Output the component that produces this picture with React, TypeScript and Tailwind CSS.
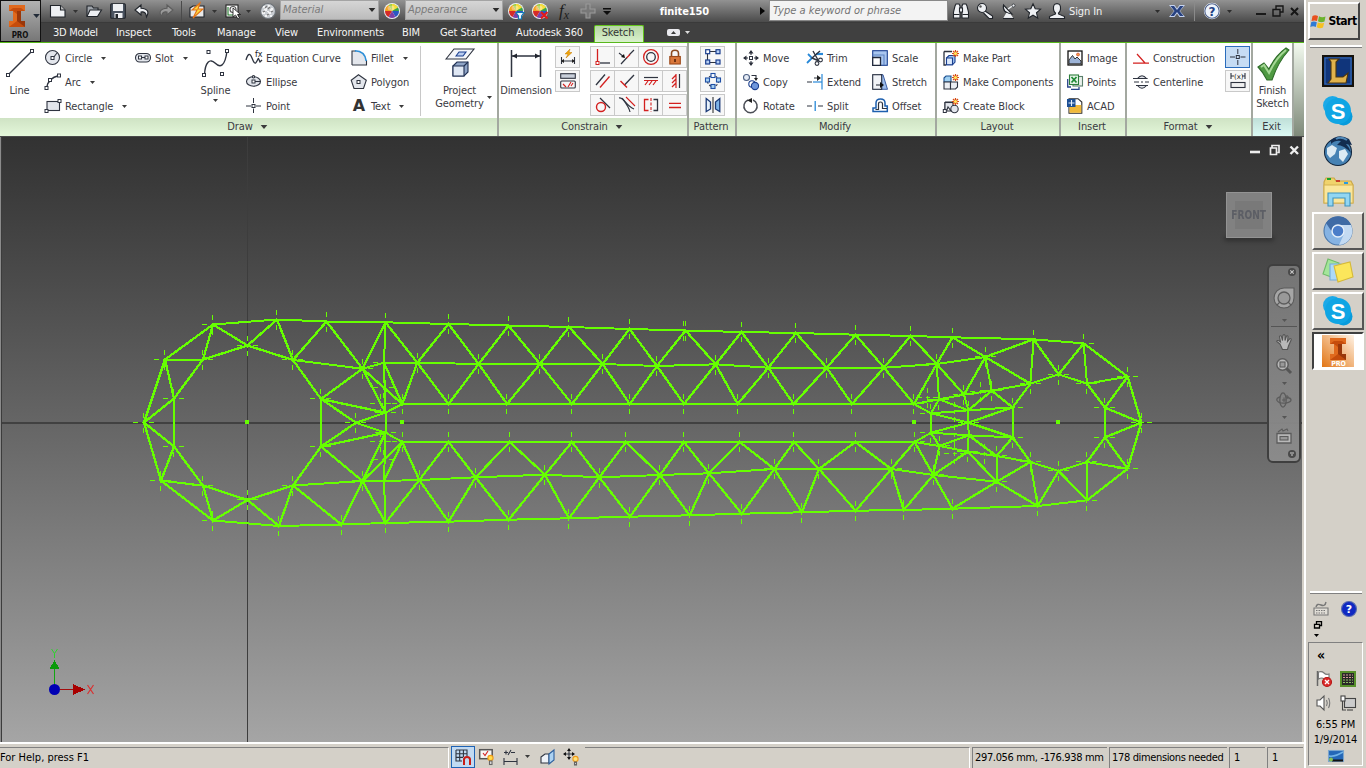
import React from "react";

type Pt = [number, number];
type Kids = { children?: React.ReactNode; className?: string };

const G = "#66ff00";

/* ---------- sketch geometry ---------- */
const L: Record<string, Pt> = {
  n1: [144, 422.5], n2: [165, 359.5], n3: [213, 324.5], n4: [277, 319.5], n5: [326.5, 321.5],
  a1: [203, 359.5], a2: [247.5, 345.5], a3: [293, 360], a4: [174, 398.5], a5: [174, 446.5],
  a6: [161, 480.7], a7: [203, 485.5], a8: [213, 520.5], a9: [247.5, 500], a10: [293, 485.5],
  a11: [279, 526], a12: [341.5, 524.5], a14: [321, 399], a15: [321, 446.5],
  a16: [362.5, 368.7], a17: [384, 362.7], a20: [385.5, 412.7], a21: [356, 422.7], a22: [385.5, 432.7],
  a24: [362.5, 481], a25: [384, 481],
};
const z = (x: number, y: number): Pt => [750 + x / 3, 300 + y / 3];
const R: Record<string, Pt> = {
  b: z(543, 340), c: z(567, 298), d: z(642, 284), e: z(655, 331), f: z(725, 272), g: z(841, 251),
  h: z(788, 322), i: z(655, 368), j: z(543, 398), k: z(656, 406), l: z(788, 412), m: z(568, 438),
  n: z(653, 455), o: z(740, 468), p: z(841, 486), q: z(926, 223), r: z(1011, 251), s: z(1065, 323),
  t: z(1065, 412), u: z(1011, 486), v: z(926, 513),
  A: z(851, 118), B: z(1001, 130), C: z(1133, 230), D: z(1174, 368), E: z(1133, 506), F: z(1011, 601), H: z(863, 618),
};
const topOuter: Pt[] = [[385.5, 322.3], [448.5, 324], [508.5, 325.5], [569, 327], [629.5, 329], [685.5, 330.5], [741.5, 332], [796, 333], [855.5, 334.7], [910.5, 336], [952.5, 337.3]];
const topMid: Pt[] = [[417.3, 362.7], [478.7, 364], [540, 364], [602.7, 364], [657, 366], [715.7, 364.3], [768.3, 367.7], [826.7, 367.7], [884, 367.7], [936.7, 364], [985.3, 357]];
const topIn: Pt[] = [402.3, 448.5, 507, 572, 629.7, 684, 737.7, 793.7, 852, 914].map((x) => [x, 404]);
const botIn: Pt[] = [402.3, 448.5, 509.7, 572, 626, 684, 739.7, 794, 855.3, 914.7].map((x) => [x, 442]);
const botMid: Pt[] = [[419.3, 480], [475.7, 477.3], [545, 474.7], [599.3, 477.3], [660, 475], [709, 473.3], [774.3, 469], [819, 469], [891.3, 469], [933.3, 475], [996.7, 481.7]];
const botOuter: Pt[] = [[385.5, 523], [448.5, 521.7], [508.7, 519.7], [569, 518.3], [630, 516.7], [689.7, 515.3], [741.7, 513.7], [802, 512.3], [855.7, 510.7], [903.7, 510], [952.5, 508.7]];

const segs: [Pt, Pt][] = [];
const chain = (ps: Pt[]) => { for (let k = 1; k < ps.length; k++) segs.push([ps[k - 1], ps[k]]); };
[topOuter, topMid, topIn, botIn, botMid, botOuter].forEach(chain);
([[topOuter, topMid], [topIn, topMid], [botIn, botMid], [botOuter, botMid]] as [Pt[], Pt[]][]).forEach(([o, m]) => {
  o.forEach((p, k) => {
    segs.push([p, m[k]]);
    if (k > 0) segs.push([p, m[k - 1]]);
  });
});
const N: Record<string, Pt> = {
  ...L, n6: topOuter[0], a18: topMid[0], a19: topIn[0], a23: botIn[0], a26: botMid[0], a13: botOuter[0],
};
("n1-n2 n2-n3 n3-n4 n4-n5 n5-n6 n2-a1 a1-a2 a1-n3 n3-a2 a2-n4 a2-a3 n4-a3 a3-n5 n5-a16 a3-a16 a3-a14 n6-a16 n6-a17 a16-a17 a17-a18 " +
  "a16-a19 a17-a19 a16-a20 a14-a16 a14-a20 a14-a21 a14-a15 a15-a21 a15-a22 a15-a24 a15-a10 a21-a20 a21-a22 a20-a19 a20-a22 a22-a23 " +
  "a17-a20 a22-a25 a25-a13 a22-a24 a23-a24 a23-a25 a24-a25 a25-a26 a24-a10 a24-a12 a24-a13 a10-a12 a10-a11 a9-a11 a9-a8 a8-a7 a7-a9 " +
  "a9-a10 a8-a11 a11-a12 a12-a13 a7-a6 a6-a5 a5-a7 a6-a8 a6-n1 a5-n1 a4-n1 a4-a5 a4-n2 a4-a1").split(" ").forEach((e) => {
  const [p, q] = e.split("-");
  segs.push([N[p], N[q]]);
});
const M: Record<string, Pt> = {
  ...R, a: topIn[9], a_: botIn[9], y9: topMid[9], y10: topMid[10], x: botMid[9], w: botMid[10], T: topOuter[10], S: botOuter[10],
};
("a-b b-c a-c c-d d-f f-g c-y9 y9-d d-y10 y10-f y10-g y10-A T-A A-B B-C C-D D-E E-F F-H H-S g-A c-e d-e e-f f-h g-h b-e e-h b-i e-i i-h h-l i-l " +
  "b-j j-i j-k k-i k-l k-n j-m j-a_ a_-m m-n m-k n-o o-k o-l o-p l-p m-x n-x n-w o-w w-p w-H p-H p-v v-H v-u v-F u-F u-E u-t t-E t-D t-s s-D s-C s-r r-C r-B r-q q-B q-A q-g").split(" ").forEach((e) => {
  const [p, q] = e.split("-");
  segs.push([M[p], M[q]]);
});
const loose: Pt[] = [[381, 403.5], [383.5, 387.5], [381, 441.5], [383.5, 459.5], z(532, 293), z(614, 336), z(692, 275), z(614, 460), z(704, 462), z(614, 405), [684, 331]];
const nodes: Pt[] = [...Object.values(L), ...Object.values(R), ...topOuter, ...topMid, ...topIn, ...botIn, ...botMid, ...botOuter, ...loose];
const tick = ([px, py]: Pt) => {
  const x = Math.floor(px - 0.01) + 0.5;
  const y = Math.floor(py - 0.01) + 0.5;
  return `M${x} ${y - 9.5}v5M${x} ${y - 2}v4M${x} ${y + 5.5}v5M${x - 10.5} ${y}h5M${x - 2} ${y}h4M${x + 5.5} ${y}h5`;
};
const steep = segs.filter(([a, b]) => Math.abs(a[0] - b[0]) > 8 && Math.abs(a[1] - b[1]) > 12);
const flat = segs.filter((s) => !steep.includes(s));
const toPath = (s: [Pt, Pt][]) => s.map(([a, b]) => `M${a[0]} ${a[1]}L${b[0]} ${b[1]}`).join("");

function Drawing() {
  return (
    <svg className="absolute inset-0" width="1302" height="605" viewBox="0 137 1302 605" shapeRendering="crispEdges">
      <path d="M1.5 137V742" stroke="#3c3c3c" />
      <path d="M0.5 137V742" stroke="#8b8b8b" />
      <path d="M247.5 137V742" stroke="#3d3d3d" />
      <path d="M2 423H1302" stroke="#414141" strokeWidth="2" />
      <path d={nodes.map(tick).join("")} stroke={G} fill="none" />
      <path d={toPath(flat)} stroke={G} strokeWidth="2" fill="none" />
      <path d={toPath(steep)} stroke={G} strokeWidth="2.3" fill="none" />
      {[[245, 420], [400, 420], [912, 420], [1056, 420]].map(([x, y]) => <rect key={x} x={x} y={y} width="4" height="4" fill={G} />)}
      <path d="M54.5 689V668" stroke="#11a611" />
      <path d="M49.5 669L54.5 660L59.5 669Z" fill="#0a9a0a" />
      <path d="M60 689.5H74" stroke="#a30d0d" />
      <path d="M73 684L85 689.5L73 695Z" fill="#a80000" />
      <circle cx="54.5" cy="689.5" r="5.5" fill="#0000b4" shapeRendering="auto" />
      <path d="M51.5 649L54.5 653.5V658M57.5 649L54.5 653.5" stroke="#2bd42b" fill="none" shapeRendering="auto" />
      <path d="M87.5 685L93.5 694M93.5 685L87.5 694" stroke="#d93030" shapeRendering="auto" strokeWidth="1.2" />
    </svg>
  );
}

/* ---------- icon helpers ---------- */
function Ic({ s = 16, w, h, children }: { s?: number; w?: number; h?: number; children: React.ReactNode }) {
  return <svg className="shrink-0 overflow-visible" width={w ?? s} height={h ?? s} viewBox={`0 0 ${w ?? s} ${h ?? s}`} fill="none" stroke="#2f3440" strokeWidth="1.1">{children}</svg>;
}
function Dot({ x, y, c = "#2f3440", f = "#fff" }: { x: number; y: number; c?: string; f?: string }) {
  return <rect x={x - 1.5} y={y - 1.5} width="3" height="3" fill={f} stroke={c} strokeWidth="1" />;
}
function Arrow({ c = "#3b3b3b", w = 5 }: { c?: string; w?: number }) {
  return <svg className="shrink-0" width={w} height={Math.ceil(w / 2)} viewBox="0 0 10 6"><path d="M0 0H10L5 6Z" fill={c} /></svg>;
}
function Wheel({ children }: { children?: React.ReactNode }) {
  const cols = ["#2a57c4", "#7b3fa8", "#37a34a", "#9ac832", "#f4a21f", "#d52b27"];
  const order = [0, 1, 5, 4, 3, 2].map((k) => cols[k]);
  return (
    <Ic>
      <g stroke="none">
        <circle cx="8" cy="8" r="8" fill="#eef1f5" />
        {order.map((c, k) => {
          const a = (k * Math.PI) / 3, b = ((k + 1) * Math.PI) / 3;
          return <path key={c} fill={c} d={`M8 8L${8 + 7 * Math.cos(a)} ${8 + 7 * Math.sin(a)}A7 7 0 0 1 ${8 + 7 * Math.cos(b)} ${8 + 7 * Math.sin(b)}Z`} />;
        })}
        <path d="M8 8L8 1A7 7 0 0 1 14 4.500Z" fill="#f6dc3a" />
        <ellipse cx="7" cy="5" rx="3.5" ry="2.5" fill="#fff" opacity=".35" />
      </g>
      {children}
    </Ic>
  );
}

const RED = "#d3201f";
const BL = "#1b3f8f";
const burst = <g><path d="M12.5 0V7M9 3.5H16M10 1L15 6M15 1L10 6" stroke="#d84a12" strokeWidth="1.2" /><circle cx="12.5" cy="3.5" r="1.6" fill="#ffe95a" stroke="none" /></g>;
const face = "#e3e6ec";

const I = {
  circle: <Ic><circle cx="7.5" cy="7.5" r="7" fill={face} /><path d="M8 8L12 3" /><Dot x={7.5} y={8} /></Ic>,
  arc: <Ic><path d="M1.5 14Q3 4 14 1.5" strokeWidth="1.4" /><Dot x={1.5} y={14} /><Dot x={5} y={6} /><Dot x={14} y={1.5} /></Ic>,
  rect: <Ic><rect x="2" y="3.5" width="12.5" height="9" fill={face} /><Dot x={1.5} y={13} /><Dot x={14.5} y={3} /></Ic>,
  slot: <Ic><rect x=".5" y="3.5" width="15" height="8.5" rx="4.2" fill={face} /><path d="M4.5 7.5H11" /><Dot x={5} y={7.5} /><Dot x={11.5} y={7.5} /></Ic>,
  line: <Ic w={28} h={30}><path d="M2 27L26 3" strokeWidth="1.5" /><Dot x={2} y={27} /><Dot x={26} y={3} /></Ic>,
  spline: <Ic w={28} h={30}><path d="M2.5 27C3 14 8 10 13 15S23 19 25 3" strokeWidth="1.4" /><Dot x={2} y={27} /><Dot x={6.5} y={4} /><Dot x={20} y={26} /><Dot x={25} y={3} /></Ic>,
  eq: <Ic><path d="M0 10C2 3 4 3 6 8S9 15 11 11S12 8 14 12L16 10" strokeWidth="1.3" /><text x="9" y="6.5" fontSize="8" stroke="none" fill="#222" fontFamily="DejaVu Sans">fx</text></Ic>,
  ellipse: <Ic><ellipse cx="7.5" cy="7.5" rx="7" ry="4.7" fill={face} /><path d="M7.5 7.5H14" /><Dot x={7.5} y={7.5} /><circle cx="7.5" cy="2.8" r="1.2" fill="#fff" /></Ic>,
  point: <Ic><path d="M0 8H5M10 8H15M7.5 0V5M7.5 10.5V15" strokeWidth="1" /><Dot x={7.5} y={8} /></Ic>,
  fillet: <Ic><path d="M1 1H5Q15 2 15.5 11V15H1Z" fill={face} stroke="none" /><path d="M1 15V1H5M15.5 10V15H1" /><path d="M4 .8Q14 1 15.2 11" stroke="#2d8fd8" strokeWidth="1.6" /></Ic>,
  polygon: <Ic><path d="M7.5 .8L15.3 6.2L12.5 14.5H3L.2 6.2Z" fill={face} /><Dot x={7.5} y={8} /></Ic>,
  text: <span className="w-4 text-center font-['DejaVu_Sans'] text-[16px] leading-4 font-bold text-[#333]">A</span>,
  proj: <Ic w={30} h={30}><path d="M1 11L9 1H29L21 11Z" fill="#f4f6fa" /><path d="M11 8L14 4H21L18 8Z" fill="#b9cdf0" stroke={BL} /><path d="M8 18L12 14H23V24L19 28H8Z" fill="#8fa4c6" stroke="#1f2f52" /><path d="M8 18H19V28H8Z" fill="#dfe7f4" stroke="#1f2f52" /><path d="M19 18L23 14" stroke="#1f2f52" /></Ic>,
  dim: <Ic w={32} h={30}><path d="M1.5 2V29M30.5 2V29M2 8H30" strokeWidth="1.5" /><path d="M2 8L7 5.5V10.5ZM30 8L25 5.5V10.5Z" fill="#20242e" stroke="none" /></Ic>,
  autodim: <Ic><path d="M1.5 8V15M14.5 8V15M2 12H14" /><path d="M1 12L4 10V14ZM15 12L12 10V14Z" fill="#222" stroke="none" /><path d="M10 0L5 5H8L6 9L12 3.5H9Z" fill="#f0a50a" stroke="#c77a00" strokeWidth=".5" /></Ic>,
  showc: <Ic><rect x=".7" y=".7" width="14.6" height="4.6" fill="#c9cfda" /><rect x=".7" y="8" width="14.6" height="7" rx="1" fill="#f6f6f6" /><path d="M3 11L6 14M8 14L11 9M11 13L13 10" stroke={RED} /></Ic>,
  coin: <Ic><path d="M2.5 0V12" stroke={RED} strokeWidth="1.3" /><path d="M5 14H15" strokeWidth="1.3" /><Dot x={2.5} y={14} c={RED} /></Ic>,
  coll: <Ic><path d="M15 1L10 6M8 8.5L2 15" strokeWidth="1.2" /><path d="M11 5.5L7.5 9" stroke={RED} strokeWidth="1.3" /><path d="M0 4L5 8" /><path d="M6 9L2 8L5 5Z" fill="#111" stroke="none" /></Ic>,
  conc: <Ic><circle cx="8" cy="8" r="7.4" stroke={RED} strokeWidth="1.3" /><circle cx="8" cy="8" r="4.3" strokeWidth="1.3" /></Ic>,
  lock: <Ic><path d="M4.5 8V4.5Q4.5 1.3 8 1.3T11.5 4.5V8" stroke="#8d4a1e" strokeWidth="1.6" /><rect x="2.8" y="7.5" width="10.5" height="7.5" fill="#d9773a" stroke="#9c4a1b" /><path d="M8 10V13" stroke="#57240a" strokeWidth="1.6" /></Ic>,
  par: <Ic><path d="M1 12L10 1.5" strokeWidth="1.3" /><path d="M5 14.5L14.5 3.5" stroke={RED} strokeWidth="1.3" /></Ic>,
  perp: <Ic><path d="M5.5 12L15 2" strokeWidth="1.3" /><path d="M1.5 8L8 14.5" stroke={RED} strokeWidth="1.4" /></Ic>,
  hor: <Ic><path d="M1 4.5H15" strokeWidth="1.2" /><path d="M1 7.5H15M5 8L2 12M9 8L6 12M13 8L10 12" stroke={RED} strokeWidth="1.2" /></Ic>,
  ver: <Ic><path d="M12.5 1V15" strokeWidth="1.2" /><path d="M9 1V15M9 2L5 6M9 6L5 10M9 10L5 14" stroke={RED} strokeWidth="1.2" /></Ic>,
  tan: <Ic><path d="M5 1L15 11" strokeWidth="1.3" /><circle cx="6" cy="10" r="4.5" stroke={RED} strokeWidth="1.4" /></Ic>,
  smooth: <Ic><path d="M0 1C5 0 7 9 15 12" strokeWidth="1.2" /><path d="M3 1C6 5 10 10 11 15" strokeWidth="1.2" /><path d="M7 0L16 9" stroke={RED} strokeWidth="1.1" /></Ic>,
  sym: <Ic><path d="M5.5 2.5H1.5V13.5H5.5" stroke={RED} strokeWidth="1.3" /><path d="M8 1V15" stroke={RED} strokeDasharray="3 1.5" /><path d="M10.5 2.5H14.5V13.5H10.5" strokeWidth="1.3" /></Ic>,
  equal: <Ic><path d="M2 6.3H14M2 10.5H14" stroke={RED} strokeWidth="1.3" /></Ic>,
  prect: <Ic><path d="M5 2.5H11M2.5 5V11M5 13.5H11" /><g stroke={BL} strokeWidth="1.2" fill="#b7d0f4"><rect x=".7" y=".7" width="4" height="4" fill="#fff" /><rect x="11" y=".7" width="4" height="4" /><rect x=".7" y="11" width="4" height="4" /><rect x="11" y="11" width="4" height="4" /></g></Ic>,
  pcirc: <Ic><circle cx="8" cy="8" r="5.5" strokeDasharray="2 1.5" /><g stroke="#1f4fa5" strokeWidth="1.1" fill="#a8d1f2"><rect x="6" y=".5" width="4" height="4" fill="#fff" /><rect x=".5" y="5" width="4" height="4" /><rect x="11.5" y="5" width="4" height="4" /><rect x="6" y="11.5" width="4" height="4" /></g></Ic>,
  mirror: <Ic><path d="M8 0V16" stroke="#333" /><path d="M1.2 1.5L5.5 5V12L1.2 14.500Z" fill="#e8f2fb" stroke="#1b3a78" strokeWidth="1.3" /><path d="M14.8 1.5L10.5 5V12L14.8 14.500Z" fill="#7fb4e8" stroke="#1b3a78" strokeWidth="1.3" /></Ic>,
  move: <Ic><path d="M8 1V5M8 11V15M1 8H5M11 8H15" /><path d="M8 0L10.5 3.5H5.5ZM8 16L10.5 12.5H5.5ZM0 8L3.5 5.5V10.5ZM16 8L12.5 5.5V10.5Z" fill="#2b2f3a" stroke="none" /><Dot x={8} y={8} /></Ic>,
  copy: <Ic><circle cx="3.5" cy="3.5" r="3" fill="#e6ecf6" stroke="#4b5e82" /><circle cx="9" cy="10" r="3.2" fill="#fff" stroke={BL} /><circle cx="12" cy="12" r="3.6" fill="#6f97dc" stroke={BL} /><path d="M8.5 1.5H13V5" /><path d="M11 4H15L13 7Z" fill="#222" stroke="none" /></Ic>,
  rotate: <Ic><path d="M5 2A6.6 6.6 0 1 0 10 2" stroke="#4a4d55" strokeWidth="1.5" /><path d="M9 0L4 2.2L9 5Z" fill="#222" stroke="none" /></Ic>,
  trim: <Ic><path d="M1 4L5 8L0 13" stroke="#2788d8" strokeWidth="1.8" /><path d="M9 4H16" stroke="#2788d8" strokeWidth="2.2" /><path d="M6 1L11 10M13 1L5 8L12 11" strokeWidth="1.4" /><circle cx="13.500" cy="10" r="1.900" /><circle cx="10" cy="13.500" r="1.900" /></Ic>,
  extend: <Ic><path d="M0 8H5M7 4H13" /><path d="M6 8H15" stroke="#2788d8" strokeWidth="1.2" /><path d="M15 0V15.5" stroke="#2788d8" strokeWidth="1.2" /><path d="M10 1L14 4L10 7Z" fill="#222" stroke="none" /></Ic>,
  split: <Ic><path d="M0 8H5M11 8H16" /><path d="M8.2 3V13" stroke="#2788d8" strokeWidth="1.3" /></Ic>,
  scale: <Ic><rect x=".7" y=".7" width="14.6" height="14.6" fill="#a9c6ef" stroke={BL} /><path d="M.7 7.5H8.5V15.3H.7Z" fill="#fff" stroke="#222a3c" strokeWidth="1.3" /><path d="M.7 5H12V15" stroke="#5f84c2" /></Ic>,
  stretch: <Ic><path d="M8 .7H11L15.5 15.3H8Z" fill="#9dbdec" stroke={BL} strokeWidth=".8" /><rect x=".7" y=".7" width="9" height="14.6" fill="#f1f3f7" stroke="#222a3c" /><path d="M4 11H9" /><path d="M8 8L12 11L8 14Z" fill="#111" stroke="none" /></Ic>,
  offset: <Ic><path d="M1 10H4V5Q4 1 8.500 1T13 5V8H15.3V13.5H1Z" fill="#fff" stroke="#1d5fae" strokeWidth="1.5" /><path d="M3.500 11.500H6.500V6Q6.500 4 8.500 4T10.500 6V10.500H15" strokeWidth="1.2" /></Ic>,
  mpart: <Ic><path d="M1 1.5H9M1 1.5V15H3" strokeWidth="1.3" /><path d="M3.5 8L6 5.5H12V12L9.5 14.8H3.5Z" fill="#9fc3f2" stroke={BL} /><path d="M3.5 8H9.5V14.8H3.5Z" fill="#dce9fb" stroke={BL} />{burst}</Ic>,
  mcomp: <Ic><path d="M1 4L3 2H8V8H1Z" fill="#9fd0f2" stroke="#1b4f8f" /><path d="M1 8H7.5V15H1Z" fill="#eceff4" /><path d="M7.5 8H14.5V13L12.5 15H7.5Z" fill="#eceff4" />{burst}</Ic>,
  cblock: <Ic><path d="M2 4H10M2 4V13" /><rect x="2" y="4.5" width="8" height="8" fill={face} /><circle cx="11.5" cy="11" r="3.7" fill={face} /><path d="M3.5 13H8L5 9Z" fill="#fff" /><Dot x={1.8} y={13} />{burst}</Ic>,
  image: <Ic><rect x="1" y="1" width="14" height="14" fill="#fff" stroke="#111" strokeWidth="1.3" /><path d="M2 13V10L5.5 5.5L8 9L10 7L14 11V13.8H2Z" fill="#9db4d8" stroke="#222" strokeWidth=".9" /><circle cx="11" cy="4.5" r="1.5" fill="#f0a040" stroke="#c33" strokeWidth=".6" /></Ic>,
  points: <Ic><rect x="6" y="2.500" width="9.500" height="9.500" fill="#e9f0ec" stroke="#5a7f6b" /><rect x="2.5" y="1" width="9" height="9.500" fill="#e7f5e9" stroke="#2d7d3b" /><path d="M4.500 3L9.500 8.500M9.500 3L4.500 8.500" stroke="#1f8a35" strokeWidth="1.8" /><path d="M.7 5V13H4M4 15.300H12V13" strokeWidth="1.3" stroke="#29468a" /></Ic>,
  acad: <Ic><path d="M2 .7H11L14.8 4V15.3H2Z" fill="#fff" stroke="#2a2a2a" /><path d="M2.500 7H14.300V14.800H2.500Z" fill="#f0b93a" stroke="none" /><path d="M0 1H8.500V9H0Z" fill="#1c4f94" stroke="none" /><path d="M4.5 2V8M1.5 5H7.5" stroke="#e6f2ff" /></Ic>,
  constr: <Ic><path d="M0 13.2H16M4 4L12 13" stroke={RED} strokeWidth="1.2" /></Ic>,
  center: <Ic><path d="M4.500 4.500Q9 -1 13.500 4.500ZM4.500 11.500Q9 17 13.500 11.500Z" fill={face} /><path d="M0 4.500H14.500M3 11.500H15" /><path d="M1 8H6M8 8H10M12 8H16" /></Ic>,
  cpoint: <Ic><path d="M0 8H5M10.5 8H15.5M7.8 0V5M7.8 11V16" strokeWidth="1" /><Dot x={7.8} y={8} f="#c8dcf3" /></Ic>,
  driven: <Ic><path d="M1 0V6M15 0V6M1 3H4M12 3H15" /><text x="4" y="5.8" fontSize="7" stroke="none" fill="#222" fontFamily="DejaVu Sans">(x)</text><rect x="1" y="9.5" width="14" height="5" fill="#f0f0f0" /></Ic>,
};

/* ---------- ribbon parts ---------- */
function Item({ icon, label, arrow }: { icon: React.ReactNode; label: string; arrow?: boolean }) {
  return (
    <div className="flex h-6 items-center whitespace-nowrap">
      {icon}
      <span className="ml-1 pt-px">{label}</span>
      {arrow && <span className="ml-[9px]"><Arrow /></span>}
    </div>
  );
}
function Col({ children, className = "" }: Kids) {
  return <div className={"flex shrink-0 flex-col " + className}>{children}</div>;
}
function Big({ icon, label, className = "", children }: Kids & { icon: React.ReactNode; label: string }) {
  return (
    <div className={"flex shrink-0 flex-col items-center pt-0.5 " + className}>
      <div className="flex h-[35px] items-start">{icon}</div>
      <span className="w-full pt-px text-center leading-[13px] whitespace-pre-line">{label}</span>
      {children}
    </div>
  );
}
function Btn({ children, on }: Kids & { on?: boolean }) {
  return <div className={"-mr-px mb-0.5 flex h-[22px] w-[25px] shrink-0 items-center justify-center border " + (on ? "border-[#2a6cbc] bg-[#c6dcf4]" : "border-[#c9c9c9] bg-[#f7f7f7]")}>{children}</div>;
}
function Panel({ title, arrow, className = "", tone = "from-[#cfe3c4] to-[#e4f7da]", children }: Kids & { title: string; arrow?: boolean; tone?: string }) {
  return (
    <section className={"flex shrink-0 flex-col border-r-2 border-[#a3a8a0] " + className}>
      <div className="flex h-[75px] bg-white pt-[3px]">{children}</div>
      <div className={"flex h-[18px] items-center justify-center gap-[7px] bg-gradient-to-b pr-[2px] " + tone}>
        <span>{title}</span>
        {arrow && <Arrow w={8} />}
      </div>
    </section>
  );
}

function Ribbon() {
  return (
    <div className="flex h-[94px] shrink-0 border-t border-[#58b81c] bg-[#fff] text-[#3a3a42]">
      <Panel title="Draw" arrow className="w-[499px]">
        <Big icon={I.line} label="Line" className="w-[39px]" />
        <Col className="w-[91px] pl-[6px]">
          <Item icon={I.circle} label="Circle" arrow />
          <Item icon={I.arc} label="Arc" arrow />
          <Item icon={I.rect} label="Rectangle" arrow />
        </Col>
        <Col className="w-[67px] pl-[5px]"><Item icon={I.slot} label="Slot" arrow /></Col>
        <Big icon={I.spline} label="Spline" className="w-[37px]"><span className="mt-[2px] flex"><Arrow /></span></Big>
        <Col className="w-[105px] pl-3">
          <Item icon={I.eq} label="Equation Curve" />
          <Item icon={I.ellipse} label="Ellipse" />
          <Item icon={I.point} label="Point" />
        </Col>
        <Col className="w-[81px] pl-3">
          <Item icon={I.fillet} label="Fillet" arrow />
          <Item icon={I.polygon} label="Polygon" />
          <Item icon={I.text} label="Text" arrow />
        </Col>
        <div className="h-[70px] w-px bg-[#c8c8c8]" />
        <Big icon={I.proj} label={"Project\nGeometry"} className="ml-3 w-[53px]" />
        <div className="self-end pb-[19px] pl-px"><Arrow /></div>
      </Panel>
      <Panel title="Constrain" arrow className="w-[190px]">
        <Big icon={I.dim} label="Dimension" className="w-[54px]" />
        <Col className="ml-[2px] w-[35px] gap-0">
          <Btn>{I.autodim}</Btn>
          <Btn>{I.showc}</Btn>
        </Col>
        <div className="grid grid-cols-[24px_24px_24px_24px] content-start">
          {[I.coin, I.coll, I.conc, I.lock, I.par, I.perp, I.hor, I.ver, I.tan, I.smooth, I.sym, I.equal].map((x, k) => <Btn key={k}>{x}</Btn>)}
        </div>
      </Panel>
      <Panel title="Pattern" className="w-[48px]">
        <Col className="pl-[11px]">
          <Btn>{I.prect}</Btn>
          <Btn>{I.pcirc}</Btn>
          <Btn>{I.mirror}</Btn>
        </Col>
      </Panel>
      <Panel title="Modify" className="w-[200px]">
        <Col className="w-[64px] pl-[6px]">
          <Item icon={I.move} label="Move" />
          <Item icon={I.copy} label="Copy" />
          <Item icon={I.rotate} label="Rotate" />
        </Col>
        <Col className="w-[65px] pl-[6px]">
          <Item icon={I.trim} label="Trim" />
          <Item icon={I.extend} label="Extend" />
          <Item icon={I.split} label="Split" />
        </Col>
        <Col className="pl-[6px]">
          <Item icon={I.scale} label="Scale" />
          <Item icon={I.stretch} label="Stretch" />
          <Item icon={I.offset} label="Offset" />
        </Col>
      </Panel>
      <Panel title="Layout" className="w-[124px]">
        <Col className="pl-[6px]">
          <Item icon={I.mpart} label="Make Part" />
          <Item icon={I.mcomp} label="Make Components" />
          <Item icon={I.cblock} label="Create Block" />
        </Col>
      </Panel>
      <Panel title="Insert" className="w-[66px]">
        <Col className="pl-[6px]">
          <Item icon={I.image} label="Image" />
          <Item icon={I.points} label="Points" />
          <Item icon={I.acad} label="ACAD" />
        </Col>
      </Panel>
      <Panel title="Format" arrow className="w-[126px]">
        <Col className="w-[98px] pl-[6px]">
          <Item icon={I.constr} label="Construction" />
          <Item icon={I.center} label="Centerline" />
        </Col>
        <Col>
          <Btn on>{I.cpoint}</Btn>
          <Btn>{I.driven}</Btn>
        </Col>
      </Panel>
      <Panel title="Exit" tone="from-[#bfdfd8] to-[#dcfaf4]" className="w-[41px] border-r-0">
        <Big
          icon={<Ic w={32} h={33}><path d="M1 19L7 15L12 21Q18 8 29 0L32 2Q21 14 15 32H10Q6 24 1 19Z" fill="#4f9a42" stroke="#2e6b29" /><path d="M4 19L7 17L12 25Q19 10 29 2" stroke="#a5d795" strokeWidth="2" /></Ic>}
          label={"Finish\nSketch"} className="w-[39px]"
        />
      </Panel>
      <div className="flex-1 bg-gradient-to-b from-[#f3faef] to-[#7f8a7a]" />
    </div>
  );
}

/* ---------- title bar ---------- */
function S({ children, className = "" }: Kids) {
  return <div className={"flex h-full shrink-0 items-center justify-center " + className}>{children}</div>;
}
const W = "#eef0f3";
const D = "#20242a";
const combo = "mb-[2px] flex h-[20px] items-center justify-between border border-[#a4a4a4] bg-gradient-to-b from-[#d6d6d6] to-[#bcbcbc] px-[2px] text-[11px] tracking-normal text-[#7b7b7b] italic ";

function TitleBar() {
  return (
    <div className="flex h-[23px] items-center border-b border-[#3a3a3a] bg-gradient-to-b from-[#929292] via-[#6e6e6e] to-[#4b4b4b] pl-1">
      <S className="w-[26px]"><Ic><path d="M.5 2.5H10.5L15 7V14H.5Z" fill={W} stroke={D} /><path d="M10.5 2.5V7H15" fill="#bbb" stroke={D} /></Ic></S>
      <S className="w-2"><Arrow c="#333" /></S>
      <S className="w-[30px]"><Ic><path d="M1 13V3H6L7.5 5H12V7" fill="#9fa4aa" stroke={D} /><path d="M1 13.5L4 7H15.5L11.5 13.5Z" fill={W} stroke={D} /></Ic></S>
      <S className="w-[18px]"><Ic><rect x=".7" y=".7" width="14.6" height="14.6" rx="1" fill="#4a5360" stroke={D} /><rect x="3" y="1" width="10" height="7" fill={W} stroke="none" /><rect x="4.5" y="10" width="8" height="5" fill={W} stroke="none" /><rect x="5.5" y="11" width="2.5" height="4" fill={D} stroke="none" /></Ic></S>
      <S className="w-[30px]"><Ic><path d="M7 2L1 7L7 12V9Q12 8 12.5 14Q17 6 7 5.2Z" fill={W} stroke={D} /></Ic></S>
      <S className="w-[18px]"><Ic><path d="M9 2L15 7L9 12V9Q4 8 3.5 14Q-1 6 9 5.2Z" fill="#9a9a9a" stroke="#5c5c5c" /></Ic></S>
      <S className="w-3"><span className="h-[21px] w-px bg-[#4a4a4a]" /></S>
      <S className="w-5"><Ic><path d="M1 5L4 3H15V14H1Z" fill="#e9e9e9" stroke={D} /><path d="M11 0L3 7H8L4 15L14 6H9Z" fill="#ffd73a" stroke="#e2731c" /></Ic></S>
      <S className="w-[14px]"><Arrow c="#333" /></S>
      <S className="w-6"><Ic><rect x="1" y="2" width="12" height="12" fill="#fafafa" stroke="#222" /><path d="M3 4V12H10" stroke="#237a2a" /><circle cx="8" cy="6.5" r="3" stroke="#555" /><path d="M8 5V14L10.5 12L13 16L14.5 15L12.5 11.5H15.5Z" fill="#fff" stroke="#111" strokeWidth=".8" /></Ic></S>
      <S className="w-[7px]"><Arrow c="#333" /></S>
      <S className="w-7 pl-[3px]"><Ic><circle cx="8" cy="8" r="7.5" fill="#c9cdd2" stroke="#6d7277" /><path d="M3 4H5M8 3H10M4 7H7M10 7H13M2 10H5M8 10H11M5 13H7M10 13H12M6 5V6M12 5V6M8 8V9" stroke="#fff" strokeWidth="1.6" /><path d="M5 5L7 3M8 6L10 4M3 9L5 8M11 9L13 8M7 12L9 11" stroke="#777" /></Ic></S>
      <div className={combo + "w-[99px]"}><span>Material</span><Arrow c="#2a2a2a" w={8} /></div>
      <S className="w-[26px]"><Wheel /></S>
      <div className={combo + "w-[98px]"}><span>Appearance</span><Arrow c="#2a2a2a" w={8} /></div>
      <S className="w-[25px]"><Wheel><path d="M8 9.5H16L13.5 13V16H10.5V13Z" fill="#eaf6fd" stroke="#1279b8" /></Wheel></S>
      <S className="w-6"><Wheel><path d="M9 9L15.5 15.5M15.5 9L9 15.5" stroke="#e11b1b" strokeWidth="2.2" /></Wheel></S>
      <S className="w-6 font-['Liberation_Serif'] text-[17px] text-[#1c1c1c] italic"><span className="leading-4">f</span><span className="pt-2 text-[12px] leading-3">x</span></S>
      <S className="w-6"><Ic><path d="M6 1H10V6H15V10H10V15H6V10H1V6H6Z" fill="#787878" stroke="#9a9a9a" /></Ic></S>
      <S className="w-[14px]"><svg width="8" height="7"><path d="M0 0H8V1.5H0ZM0 3H8L4 7Z" fill="#0d0d0d" /></svg></S>
      <S className="w-[141px] pt-px font-bold text-white">finite150</S>
      <S className="w-[14px]"><svg width="5" height="8"><path d="M0 0L5 4L0 8Z" fill="#050505" /></svg></S>
      <div className="mb-[2px] flex h-[21px] w-[179px] shrink-0 items-center border border-[#888] bg-[#f3f3f3] px-[3px] pt-[2px] text-[11px] tracking-normal text-[#747474] italic">Type a keyword or phrase</div>
      <S className="w-[25px]"><Ic><g fill={W} stroke={D}><path d="M2 3L3 1H6L7 3V15H.5V9ZM14 3L13 1H10L9 3V15H15.5V9Z" /><path d="M6.5 5H9.5V9H6.5Z" /><path d="M1 11.5H6.5M9.5 11.5H15" /></g></Ic></S>
      <S className="w-6"><Ic><path d="M8 8L15.5 13V15.5H12L6.5 10" fill={W} stroke={D} /><circle cx="5" cy="5" r="4.5" fill={W} stroke={D} /><circle cx="3.5" cy="3.5" r="1.2" fill="#555" stroke="none" /></Ic></S>
      <S className="w-6"><Ic><path d="M2.500 2Q1 10 11 11Z" fill={W} stroke={D} /><path d="M6 10L3.500 14.500H11L8.5 11M7 6L12 2.500" fill={W} stroke={W} strokeWidth="1.5" /><circle cx="12.500" cy="2.500" r="1.500" fill={W} stroke={D} strokeWidth=".7" /><path d="M2 15.5H13" stroke={D} /></Ic></S>
      <S className="w-[23px]"><Ic><path d="M8 .8L10.2 5.8L15.5 6.3L11.5 9.8L12.7 15L8 12.2L3.3 15L4.5 9.8L.5 6.3L5.8 5.8Z" fill={W} stroke={D} /></Ic></S>
      <S className="w-[25px]"><Ic><path d="M8 .6Q12 .6 11.5 6Q11 9.5 9.5 10V11L15.5 13.5V15.5H.5V13.5L6.5 11V10Q5 9.5 4.5 6Q4 .6 8 .6Z" fill={W} stroke={D} /></Ic></S>
      <S className="w-[82px] justify-start! pt-px text-[#f2f2f2]">Sign In</S>
      <S className="w-3"><Arrow c="#2c2c2c" /></S>
      <S className="w-7"><Ic><path d="M0 2H5.500L8 5.500L10.500 2H16L11 8L16 14H10.500L8 10.500L5.500 14H0L5 8Z" fill="#c5d3f0" stroke="none" /><path d="M1.5 3H5L8 7L11 3H14.5L10.500 8L14.5 13H11L8 9L5 13H1.5L5.500 8Z" fill="#27417f" stroke="none" /></Ic></S>
      <S className="w-[6px]"><span className="h-[20px] w-px bg-[#8a8a8a]" /></S>
      <S className="w-[29px]"><Ic><circle cx="8" cy="8" r="7.6" fill="#eef3fb" stroke="#fff" /><circle cx="8" cy="8" r="7.2" stroke="#4b5f8a" /><text x="8" y="12.5" textAnchor="middle" fontSize="12" fontWeight="bold" fontFamily="DejaVu Sans" fill="#223f82" stroke="none">?</text></Ic></S>
      <S className="w-[6px]"><Arrow c="#2c2c2c" /></S>
      <S className="w-[18px]" />
      <S className="w-[21px] pt-1.5"><span className="h-0.5 w-[10px] bg-[#1a1a1a]" /></S>
      <S className="w-[14px]"><Ic s={12}><path d="M4 4V1H11V7H8M1 4.5H8V11H1Z" stroke="#161616" strokeWidth="1.4" /></Ic></S>
      <S className="w-[18px]"><Ic s={9}><path d="M1 1L8 8M8 1L1 8" stroke="#161616" strokeWidth="2" /></Ic></S>
    </div>
  );
}

function Tabs() {
  return (
    <div className="flex h-[19px] items-center bg-[#404040] pl-3 text-[#f4f4f4]">
      <span className="w-[63px] tracking-[-0.25px]">3D Model</span>
      <span className="w-[56px]">Inspect</span>
      <span className="w-[45px]">Tools</span>
      <span className="w-[58px]">Manage</span>
      <span className="w-[42px]">View</span>
      <span className="w-[85px]">Environments</span>
      <span className="w-[38px]">BIM</span>
      <span className="w-[76px]">Get Started</span>
      <span className="w-[78px] whitespace-nowrap">Autodesk 360</span>
      <span className="mt-0.5 flex h-[18px] w-[50px] items-center justify-center rounded-t-xs border border-b-0 border-[#63c51c] bg-gradient-to-b from-[#b6d6a5] to-[#dcf3d0] pr-[2px] pb-0.5 text-[#333]">Sketch</span>
      <span className="ml-[23px] flex h-[7px] w-[13px] items-center justify-center rounded-xs bg-[#e9e9ee]"><span className="flex rotate-180"><Arrow /></span></span>
      <span className="ml-[5px]"><Arrow c="#ddd" /></span>
    </div>
  );
}

/* ---------- viewport overlays ---------- */
function NavBar() {
  const f = "#b9b9b9", k = "#5c5c5c";
  return (
    <div className="absolute top-[127px] left-[1267px] flex h-[199px] w-[34px] flex-col items-center rounded-md border-2 border-[#3f3f3f] bg-gradient-to-b from-[#777]/95 to-[#8c8c8c]/95">
      <div className="flex w-full justify-end pt-[2px] pr-[3px]"><Ic s={8}><circle cx="4" cy="4" r="4" fill="#4a4a4a" stroke="none" /><path d="M2.3 2.3L5.7 5.7M5.7 2.3L2.3 5.7" stroke="#c8c8c8" /></Ic></div>
      <div className="mt-[11px]"><Ic s={22}><path d="M11 1H21V11A10 10 0 1 1 11 1Z" fill="#a6a6a6" stroke={k} /><circle cx="11" cy="11" r="6" fill="#999" stroke={k} strokeWidth="1.3" /><path d="M4 18L7 15M18 18L15 15" stroke={k} /></Ic></div>
      <div className="mt-[10px] flex"><Arrow c="#555" /></div>
      <div className="mt-[4px] h-px w-[26px] bg-[#555]" />
      <div className="mt-[7px] flex"><Ic><path d="M4 10L.7 7.5Q1 6 3 6.8L4.5 8L3.5 2.5Q4.5 1 5.5 2.5L6.5 6.5L7 1.3Q8 0 9 1.3V6.5L10.5 2Q11.7 1.3 12 2.7L11.5 7.5L14 4.5Q15.5 4.5 15.2 5.8L12.5 12L11.5 15.5H6.5Z" fill={f} stroke="#555" /></Ic></div>
      <div className="mt-[8px] flex"><Ic><circle cx="6.5" cy="6.5" r="5.7" fill={f} stroke={k} strokeWidth="1.5" /><rect x="4" y="4" width="5" height="5" fill="#999" stroke={k} /><path d="M10.5 10.5L15 15" stroke="#555" strokeWidth="3" /></Ic></div>
      <div className="mt-[8px] flex"><Arrow c="#555" /></div>
      <div className="mt-[7px] flex"><Ic><ellipse cx="7" cy="8" rx="3.2" ry="7.2" stroke={k} strokeWidth="1.3" /><path d="M4 5Q0 6 1 8.500Q3 12 10 11Q15 10 15 8T11 5.500" stroke={k} strokeWidth="1.3" /><path d="M8 5.500V10M6 8H10M11 3V7M9.500 5H13" stroke={k} /></Ic></div>
      <div className="mt-[8px] flex"><Arrow c="#555" /></div>
      <div className="mt-[9px] flex"><Ic><path d="M1 5.5H15V15H1Z" fill={f} stroke={k} strokeWidth="1.3" /><rect x="4" y="8.5" width="8" height="3.5" fill="#999" stroke={k} /><path d="M2 4L6 1L7 3L11 1L12 3" stroke={k} /></Ic></div>
      <div className="mt-auto flex w-full justify-end pr-[3px] pb-[3px]"><Ic s={8}><circle cx="4" cy="4" r="4" fill="#4a4a4a" stroke="none" /><path d="M2 3H6M3 5H5" stroke="#ccc" /></Ic></div>
    </div>
  );
}

function Viewport() {
  return (
    <div className="relative h-[605px] shrink-0 overflow-hidden border-r-2 border-[#d4d0c8] bg-gradient-to-b from-[#323232] to-[#a5a5a5]">
      <Drawing />
      <div className="absolute top-[7px] left-[1248px]">
        <Ic w={54} h={13}><g stroke="#eee"><path d="M2 8H12" strokeWidth="2.6" /><path d="M24 3.500V1.500H31V8.500H29.500M22.500 4H28.500V10.500H22.500Z" strokeWidth="1.7" /><path d="M42.500 2.5L50 10M50 2.5L42.500 10" strokeWidth="2.4" /></g></Ic>
      </div>
      <div className="absolute top-[99px] left-[1224px] h-[5px] w-[50px] rounded-full bg-black/30 blur-[2px]" />
      <div className="absolute top-[55px] left-[1226px] flex h-[46px] w-[46px] items-center justify-center border border-[#939393] bg-[#818181]">
        <div className="flex h-7 w-7 items-center justify-center bg-[#797979] text-[12px] font-bold text-[#5c5e65]"><span className="scale-x-[.84] tracking-normal">FRONT</span></div>
      </div>
      <NavBar />
    </div>
  );
}

function StatusBar() {
  const cell = "ml-0.5 flex h-[21px] shrink-0 items-center border-t border-l border-[#808080] pl-[2px] tracking-[-0.35px] whitespace-nowrap ";
  return (
    <div className="flex h-[26px] shrink-0 items-end border-t-2 border-white bg-[#d4d0c8] text-[11px] text-black">
      <div className="flex h-[21px] w-[449px] items-center border-t border-r border-t-[#808080] border-r-white tracking-normal">For Help, press F1</div>
      <div className="flex h-[23px] w-[136px] items-center pl-[2px]">
        <div className="flex h-[22px] w-6 items-center justify-center border border-[#1f63b5] bg-[#c2daf2]"><Ic><path d="M1 1H12V7M1 1V12H7M1 4.7H12M1 8.4H8M4.7 1V12M8.4 1V8" /><path d="M9 16V10.5Q9 8 12 8T15 10.5V16" stroke="#c91d17" strokeWidth="2" /></Ic></div>
        <div className="ml-1"><Ic><rect x=".7" y=".7" width="12.500" height="9" fill="#f6f6f6" stroke="#555" strokeWidth="1.5" /><path d="M4 4L6 6.5L9 2" stroke={RED} /><circle cx="11.500" cy="9" r="2.6" fill="#ffdc4a" stroke="#f09a1a" /><rect x="10.500" y="12" width="2.5" height="3.5" fill="#ddd" stroke="#666" /></Ic></div>
        <div className="ml-2"><Ic><path d="M1 9V16M14 9V16M1 12.5H14M1 3.5H5M3 1.5V5.5M8 3.5H12M5 6L8 1" /></Ic></div>
        <div className="ml-1.5"><Arrow /></div>
        <div className="ml-2.5"><Ic><path d="M1 8L5 5H9V14H1Z" fill="#eef2f8" /><path d="M9 5L14 1V11L9 15Z" fill="#acd2f1" stroke="#2c5f9d" /></Ic></div>
        <div className="ml-2"><Ic><path d="M5 0V10M0 5H10" /><path d="M5 -1L7 2H3ZM5 11L7 8H3ZM-1 5L2 3V7ZM11 5L8 3V7Z" fill="#111" stroke="none" /><circle cx="11.5" cy="10" r="2.6" fill="#ffe27a" stroke="#f09a1a" /><rect x="10.5" y="13" width="2" height="3" fill="#ddd" stroke="#666" /></Ic></div>
      </div>
      <div className="h-[21px] w-[385px] border-t border-r border-t-[#808080] border-r-white" />
      <div className={cell + "w-[135px]"}>297.056 mm, -176.938 mm</div>
      <div className={cell + "w-[118px]"}>178 dimensions needed</div>
      <div className={cell + "w-[36px] pl-[4px]!"}>1</div>
      <div className={cell + "w-[36px] pl-[4px]!"}>1</div>
    </div>
  );
}

/* ---------- desktop taskbar ---------- */
const skype = (
  <Ic s={32}><g stroke="none"><circle cx="10.500" cy="10.500" r="9.500" fill="#1ba9e8" /><circle cx="21.500" cy="21.500" r="9" fill="#079bdc" /><circle cx="16" cy="16" r="13" fill="#0fa5e4" /><text x="16" y="24" textAnchor="middle" fontSize="22" fontWeight="bold" fontFamily="Liberation Sans" fill="#fff">S</text></g></Ic>
);
function TaskBtn({ children, on }: Kids & { on?: boolean }) {
  return <div className={"mb-[2px] flex h-[38px] w-[52px] items-center justify-center border-2 " + (on ? "border-t-[#404040] border-r-white border-b-white border-l-[#404040] bg-white" : "border-t-white border-r-[#555] border-b-[#555] border-l-white bg-[#d4d0c8]")}>{children}</div>;
}
const inventorI = <><path d="M8 3H24V9H20V19H24V25H8V19H12V9H8Z" fill="#c54c0c" stroke="none" /><path d="M8 3H24V9L20 6H12L8 9ZM12 9L16 12V19L8 25V19H12Z" fill="#e0691d" stroke="none" /><path d="M16 9H20V19H24V25L16 19Z" fill="#99370a" stroke="none" /></>;

function Taskbar() {
  return (
    <aside className="flex h-[768px] w-[62px] flex-col items-center border-l-2 border-[#fff] bg-[#d4d0c8] text-black">
      <div className="mt-[2px] mr-[4px] flex h-[38px] w-[52px] shrink-0 items-center justify-center gap-[2px] border-2 border-t-white border-r-[#444] border-b-[#444] border-l-white text-[12px] font-bold">
        <Ic s={15}><g stroke="none"><path d="M1.5 2Q4 .5 7 2L6 7Q3.500 5.800 .5 7Z" fill="#e8501e" /><path d="M8 2.300Q11 4 14.500 2.500L13.500 7.500Q10 9 7 7.300Z" fill="#6cb32e" /><path d="M.3 8Q3 6.800 5.800 8.200L4.800 13Q2 11.500 -.7 13Z" fill="#2f7ad6" /><path d="M6.800 8.500Q10 10 13.200 8.700L12 13.500Q9 15 5.800 13.300Z" fill="#f5c021" /></g></Ic>
        <span className="tracking-[-0.5px]">Start</span>
      </div>
      <div className="mt-[5px] h-[3px] w-[52px] shrink-0 border-t border-b border-t-white border-b-[#808080] bg-white" />
      <div className="mt-[3px] flex flex-col items-center pl-[3px]">
        <div className="flex h-10 items-center"><Ic s={32}><rect x="1" y="1" width="30" height="30" fill="#10357b" stroke="#15120c" strokeWidth="2" /><path d="M3 3H29V29H3Z" stroke="#3b6eb5" /><path d="M7 4H17L14 7V22H21L26 18L24 28H6L9 24V7Z" fill="#e0b24c" stroke="#4c350d" /></Ic></div>
        <div className="flex h-10 items-center">{skype}</div>
        <div className="flex h-10 items-center"><Ic s={30}><circle cx="15" cy="16" r="13.500" fill="#4682b4" stroke="#12273f" /><path d="M4 12L9 9L14 12L12 18L7 22L4 18ZM16 15L22 13L25 18L20 26L16 22Z" fill="#dceaf3" stroke="none" /><path d="M8 4Q16 -3 26 3L29 9L23 8Q27 12 28 17Q21 9 14 9L18 5Q12 4 8 8Z" fill="#122c50" stroke="none" /><path d="M13 3Q18 0 24 4" stroke="#4f88b7" strokeWidth="2" /></Ic></div>
        <div className="flex h-[41px] items-center"><Ic s={32}><path d="M2 6L4 2H12L14 5H29L31 9V27H2Z" fill="#f0d36c" stroke="#c9a545" /><path d="M2 9H31V27H2Z" fill="#fae69b" stroke="#d3b253" /><path d="M5 3H9" stroke="#1ba52d" strokeWidth="2" /><path d="M14 5H18" stroke="#c8402a" strokeWidth="2" /><path d="M22 7H26" stroke="#2b9be0" strokeWidth="2" /><path d="M6 30V17H28V30H23V22H11V30Z" fill="#92d6f2" stroke="#3e93be" /></Ic></div>
        <TaskBtn><Ic s={30}><circle cx="15" cy="15" r="14" fill="#86b3e3" stroke="#4d79ab" /><path d="M3 7A14 14 0 0 1 28 9H15A6.500 6.500 0 0 0 9 16Z" fill="#3f6ba5" stroke="none" /><path d="M28 9A14 14 0 0 1 16 29L21 18A6.500 6.500 0 0 0 16 9Z" fill="#c3daf2" stroke="none" /><circle cx="15" cy="15" r="6" fill="#4a7dc9" stroke="#e5effa" strokeWidth="1.500" /></Ic></TaskBtn>
        <TaskBtn><Ic s={32}><path d="M6 4L17 8L12 23L1 19Z" fill="#a4e59a" stroke="#6fbb68" /><path d="M8 9H19V25H8Z" fill="#acd9f8" stroke="#76abd8" /><path d="M12 11L28 7L31 22L16 27Z" fill="#fbe65b" stroke="#d5b938" /></Ic></TaskBtn>
        <TaskBtn>{skype}</TaskBtn>
        <TaskBtn on><Ic s={32}><defs><linearGradient id="pro" x1="1" y1="0" x2="0" y2="1"><stop offset="0" stopColor="#fff3e5" /><stop offset="1" stopColor="#e27514" /></linearGradient></defs><rect width="32" height="32" fill="url(#pro)" stroke="none" />{inventorI}<text x="16.500" y="31" textAnchor="middle" fontSize="7" fontWeight="bold" fontFamily="DejaVu Sans Condensed" fill="#fff" stroke="none">PRO</text></Ic></TaskBtn>
      </div>
      <div className="mt-[219px] h-[3px] w-[52px] shrink-0 border-t border-b border-t-white border-b-[#808080] bg-white" />
      <div className="mt-[7px] flex w-full items-center gap-3 pl-[7px]">
        <Ic><path d="M1 7H15V14H1Z" fill="#e0ddd6" stroke="#777" /><path d="M3 9.500H13M3 12H13" stroke="#777" strokeDasharray="1.500 1" /><path d="M3 6Q4 2 8 4T13 1" stroke="#777" strokeWidth="1.400" /></Ic>
        <Ic><circle cx="8" cy="8" r="7.500" fill="#1029c2" stroke="#5a6cae" /><text x="8" y="12" textAnchor="middle" fontSize="11" fontWeight="bold" fontFamily="DejaVu Sans" fill="#fff" stroke="none">?</text></Ic>
      </div>
      <div className="mt-1 flex w-full flex-col items-start gap-[5px] pl-2"><Ic s={8}><path d="M2.500 3V.7H7.500V4.500H5.500M.5 3.300H5.500V7H.5Z" stroke="#000" strokeWidth="1.300" /></Ic><Arrow c="#000" /></div>
      <div className="mt-[5px] mr-px flex h-[124px] w-[55px] shrink-0 flex-col items-center border border-t-[#808080] border-r-white border-b-white border-l-[#808080]">
        <div className="mt-[4px] w-full pl-[8px] text-[14px] leading-4 font-bold">«</div>
        <div className="mt-[8px] flex gap-2">
          <Ic><path d="M1.500 0V15" stroke="#666" strokeWidth="1.500" /><path d="M2.500 1Q6 0 8 2T13 3V9Q10 10 8 8T2.500 8Z" fill="#fff" stroke="#777" /><circle cx="11" cy="11" r="4.500" fill="#db2a2a" stroke="#b51515" /><path d="M9 9L13 13M13 9L9 13" stroke="#fff" strokeWidth="1.400" /></Ic>
          <Ic><rect x="1" y="1" width="14" height="14" fill="#282828" stroke="#57902b" strokeWidth="2" /><path d="M3 4H13M3 6.500H13" stroke="#d69a9a" strokeDasharray="2 1" /><path d="M3 9H13M3 11.500H13" stroke="#8fbf66" strokeDasharray="2 1" /></Ic>
        </div>
        <div className="mt-2 flex gap-2">
          <Ic><path d="M1 5H4L8 1V15L4 11H1Z" fill="#fff" stroke="#555" /><path d="M10.500 5Q12 8 10.500 11M12.500 3Q15 8 12.500 13" stroke="#777" /></Ic>
          <Ic><rect x="4.500" y="3.500" width="11" height="9" fill="#ccc" stroke="#444" /><path d="M7 15H13" stroke="#444" /><path d="M2.500 6V15H6" stroke="#444" /><rect x="1" y="1" width="4" height="5" fill="#fff" stroke="#444" /></Ic>
        </div>
        <div className="mt-[6px] text-[11px] leading-[15px] whitespace-nowrap">6:55 PM</div>
        <div className="text-[11px] leading-[15px] tracking-[-0.1px] whitespace-nowrap">1/9/2014</div>
        <div className="mt-[3px]"><Ic w={16} h={12}><rect x=".5" y=".5" width="15" height="11" fill="#2467b7" stroke="#7da6cc" /><path d="M1 6Q7 7 15 2" stroke="#72b4e8" strokeWidth="1.500" /><path d="M4 10.500H15" stroke="#111" strokeWidth="2" /><circle cx="3" cy="9.500" r="2" fill="#87bf53" stroke="none" /></Ic></div>
      </div>
    </aside>
  );
}

export default function App() {
  return (
    <div className="flex h-[768px] w-[1366px] overflow-hidden bg-[#d4d0c8] font-['DejaVu_Sans_Condensed','DejaVu_Sans',sans-serif] text-[11px] leading-[14px] tracking-[-0.1px]">
      <main className="flex w-[1304px] shrink-0 flex-col">
        <div className="flex h-[42px] shrink-0">
          <div className="flex w-[41px] shrink-0 flex-col border border-[#111] bg-gradient-to-b from-[#b2b2b2] to-[#777]">
            <div className="flex h-[30px] items-center"><svg width="32" height="31" viewBox="0 0 32 29">{inventorI}</svg><Arrow w={7} c="#222b38" /></div>
            <span className="w-[38px] text-center text-[8px] leading-[9px] font-bold text-[#111]">PRO</span>
          </div>
          <div className="flex min-w-0 flex-1 flex-col">
            <TitleBar />
            <Tabs />
          </div>
        </div>
        <Ribbon />
        <div className="h-px shrink-0 bg-[#4a4a4a]" />
        <Viewport />
        <StatusBar />
      </main>
      <Taskbar />
    </div>
  );
}
